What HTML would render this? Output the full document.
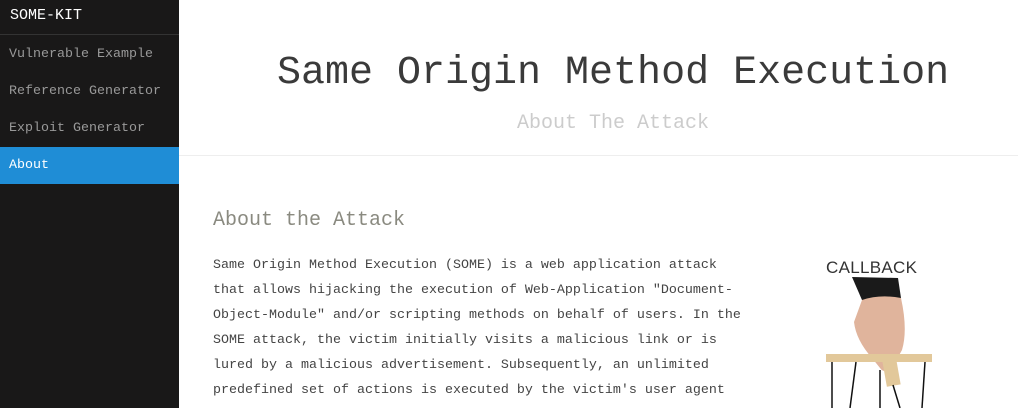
<!DOCTYPE html>
<html><head><meta charset="utf-8"><style>
*{margin:0;padding:0;box-sizing:border-box}
html,body{width:1018px;height:408px;overflow:hidden}
body{background:#fff;font-family:"Liberation Mono",monospace;position:relative}
#side{position:absolute;left:0;top:0;width:179px;height:408px;background:#191818}
.brand{height:35px;border-bottom:1px solid #333;color:#fff;font-size:15px;line-height:32px;padding-left:10px}
.it{height:37px;line-height:40px;padding-left:9px;color:#999;font-size:13.33px}
.sel{background:#1f8dd6;color:#fff;margin-top:1px;line-height:38px}
#hdr{position:absolute;left:179px;top:0;width:839px;height:156px;border-bottom:1px solid #eee;text-align:center}
h1{font-weight:normal;font-size:40px;color:#3a3a3a;position:absolute;top:51px;left:98px;white-space:nowrap}
h2{font-weight:normal;font-size:20px;color:#ccc;position:absolute;top:112px;left:338px;white-space:nowrap}
h3{position:absolute;left:213px;top:209px;font-weight:normal;font-size:20px;color:#8a8a80}
p{position:absolute;left:213px;top:253px;width:540px;font-size:13.33px;line-height:25px;color:#444;white-space:pre}
</style></head><body>
<div id="side">
<div class="brand">SOME-KIT</div>
<div class="it">Vulnerable Example</div>
<div class="it">Reference Generator</div>
<div class="it">Exploit Generator</div>
<div class="it sel">About</div>
</div>
<div id="hdr"><h1>Same Origin Method Execution</h1><h2>About The Attack</h2></div>
<h3>About the Attack</h3>
<p>Same Origin Method Execution (SOME) is a web application attack
that allows hijacking the execution of Web-Application "Document-
Object-Module" and/or scripting methods on behalf of users. In the
SOME attack, the victim initially visits a malicious link or is
lured by a malicious advertisement. Subsequently, an unlimited
predefined set of actions is executed by the victim's user agent
(web browser) without the victim's consent.</p>
<svg style="position:absolute;left:780px;top:240px" width="200" height="168">
<text x="46" y="33" font-family="Liberation Sans,sans-serif" font-size="17" fill="#333" letter-spacing="0.3">CALLBACK</text>
<path d="M72 37 L118 38 L121 58 L100 64 L82 60 Z" fill="#1a1a1a"/>
<path d="M82 60 Q100 54 121 58 Q128 90 122 110 L112 128 Q104 134 100 128 L92 118 Q76 100 74 82 Z" fill="#e0b49c"/>
<rect x="46" y="114" width="106" height="8" fill="#e2c89a"/>
<rect x="104" y="118" width="14" height="28" fill="#e2c89a" transform="rotate(-10 110 130)"/>
<g stroke="#111" stroke-width="1.5">
<line x1="52" y1="122" x2="52" y2="168"/><line x1="76" y1="122" x2="70" y2="168"/>
<line x1="100" y1="130" x2="100" y2="168"/><line x1="113" y1="145" x2="120" y2="168"/>
<line x1="145" y1="122" x2="142" y2="168"/></g>
</svg>
</body></html>
